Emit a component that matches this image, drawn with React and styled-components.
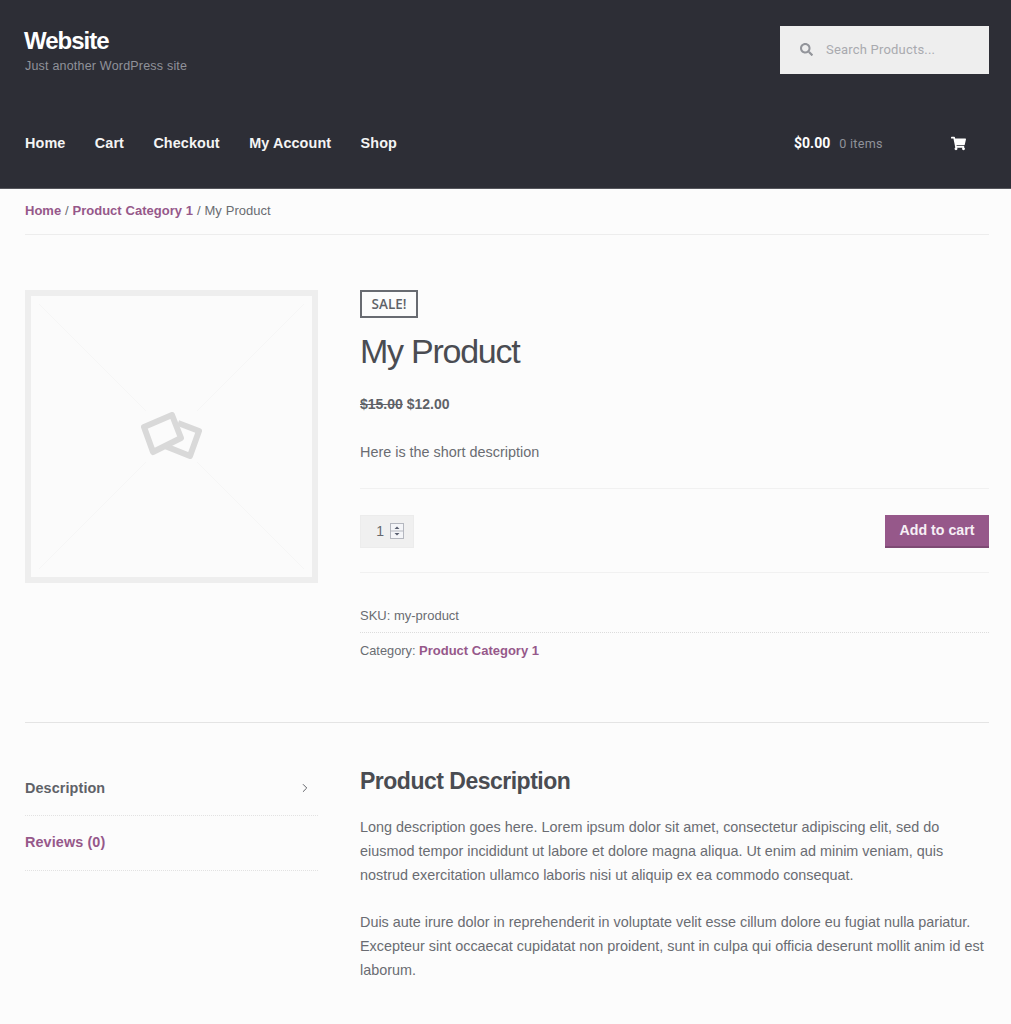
import React from "react"
import styled, { createGlobalStyle } from "styled-components"
import { FaSearch, FaShoppingCart } from "react-icons/fa"
import { ChevronRight } from "lucide-react"

const purple = "#96588a"
const text = "#6a6c72"
const dark = "#4a4c52"

const GlobalStyle = createGlobalStyle`
    html, body {
        margin: 0;
        padding: 0;
        background: #fcfcfc;
        color: ${text};
        font-family: "Liberation Sans", Arial, sans-serif;
    }
    * { box-sizing: border-box; }
    a { color: ${purple}; text-decoration: none; font-weight: 700; }
`

const Header = styled.header`
    height: 189px;
    padding: 26px 22px 0 25px;
    background: #2d2e36;
    border-bottom: 1px solid #55565c;
`

const HeaderTop = styled.div`
    display: flex;
    justify-content: space-between;
    align-items: flex-start;
    height: 48px;
`

const Brand = styled.div`
    display: flex;
    flex-direction: column;
    padding-top: 1px;
`

const SiteTitle = styled.span`
    margin-left: -1px;
    color: #fff;
    font-size: 24px;
    line-height: 28px;
    font-weight: 700;
    letter-spacing: -1px;
`

const Tagline = styled.span`
    margin-top: 4px;
    color: #90929a;
    font-size: 12.5px;
    line-height: 15px;
    letter-spacing: 0.2px;
`

const SearchBox = styled.div`
    display: flex;
    align-items: center;
    gap: 13px;
    width: 209px;
    height: 48px;
    padding: 0 0 2px 20px;
    background: #eeeeee;
    color: #a9aaaf;
    font-family: Roboto, sans-serif;
    font-size: 13px;
    letter-spacing: 0.2px;

    svg {
        color: #92949a;
        font-size: 13px;
    }
`

const HeaderBottom = styled.div`
    display: flex;
    justify-content: space-between;
    align-items: center;
    height: 26px;
    margin-top: 56px;
`

const Nav = styled.nav`
    display: flex;
    gap: 29.4px;
    color: #f4f4f4;
    font-size: 14.4px;
    font-weight: 700;
    letter-spacing: 0.1px;
`

const MiniCart = styled.div`
    display: flex;
    align-items: center;
    width: 195px;
    padding-right: 23px;
    font-family: Roboto, sans-serif;
    color: #fff;

    svg {
        margin-left: auto;
        font-size: 15px;
    }
`

const CartTotal = styled.strong`
    font-size: 14px;
    font-weight: 700;
`

const CartCount = styled.span`
    margin-left: 9px;
    color: #90929a;
    font-size: 12.6px;
    letter-spacing: 0.3px;
`

const Main = styled.main`
    padding: 0 22px 0 25px;
`

const Breadcrumb = styled.div`
    height: 46px;
    padding-top: 14px;
    border-bottom: 1px solid #ededed;
    font-size: 13px;
    line-height: 16px;
    word-spacing: 0.3px;
`

const Product = styled.section`
    display: grid;
    grid-template-columns: 293px 1fr;
    column-gap: 42px;
    padding-top: 55px;
    height: 488px;
    border-bottom: 1px solid #e4e4e4;
`

const ImageFrame = styled.div`
    width: 293px;
    height: 293px;
    border: 6px solid #eeeeee;
    background: #fbfbfb;

    svg {
        display: block;
    }
`

const Summary = styled.div`
    display: flex;
    flex-direction: column;
    align-items: stretch;
`

const SaleBadge = styled.span`
    align-self: flex-start;
    width: 58px;
    height: 28px;
    border: 2px solid #686b71;
    color: #5f6268;
    font-family: "Open Sans", sans-serif;
    font-size: 13.5px;
    line-height: 24px;
    font-weight: 600;
    text-align: center;
`

const Title = styled.h1`
    margin: 13px 0 0;
    color: ${dark};
    font-size: 34px;
    line-height: 40px;
    font-weight: 400;
    letter-spacing: -1.25px;
`

const Price = styled.div`
    margin-top: 24px;
    color: #5f6268;
    font-size: 14px;
    line-height: 18px;
    font-weight: 700;
`

const ShortDescription = styled.p`
    margin: 30px 0 0;
    font-size: 14.4px;
    line-height: 18px;
`

const CartRow = styled.div`
    display: flex;
    justify-content: space-between;
    align-items: center;
    margin-top: 27px;
    height: 85px;
    padding-top: 1px;
    border-top: 1px solid #f1f1f1;
    border-bottom: 1px solid #f1f1f1;
`

const Quantity = styled.div`
    display: flex;
    align-items: center;
    justify-content: flex-end;
    gap: 6px;
    width: 54px;
    height: 33px;
    padding-right: 10px;
    background: #f0f0f0;
    box-shadow: inset 0 0 0 1px #ececec;
    color: #66686e;
    font-size: 14px;
`

const Spinner = styled.svg`
    display: block;
`

const AddToCart = styled.button`
    width: 104px;
    height: 33px;
    padding: 0;
    border: 0;
    border-bottom: 2px solid #7e4a74;
    background: ${purple};
    color: #f6eff5;
    font-family: inherit;
    font-size: 14.2px;
    font-weight: 700;
`

const Sku = styled.div`
    height: 60px;
    padding-top: 34px;
    border-bottom: 1px dotted #dcdcdc;
    font-size: 13px;
    line-height: 18px;
`

const Category = styled.div`
    padding-top: 9px;
    font-size: 12.8px;
    line-height: 18px;

    a {
        font-size: 13px;
    }
`

const Details = styled.section`
    display: grid;
    grid-template-columns: 293px 1fr;
    column-gap: 42px;
    padding-top: 38px;
`

const Tabs = styled.ul`
    margin: 0;
    padding: 0;
    list-style: none;
`

const Tab = styled.li`
    display: flex;
    justify-content: space-between;
    align-items: center;
    height: 55px;
    padding: 0 6px ${({ $active }) => ($active ? "1px" : "3px")} 0;
    border-bottom: 1px dotted #e2e2e2;
    color: ${({ $active }) => ($active ? "#5f6268" : purple)};
    font-size: 14.4px;
    font-weight: 700;
    letter-spacing: 0.1px;

    svg {
        color: #55575d;
    }
`

const Content = styled.article`
    padding-top: 5px;
    font-size: 14.4px;
    line-height: 24px;
`

const ContentTitle = styled.h2`
    margin: 0 0 19px;
    color: ${dark};
    font-size: 23px;
    line-height: 30px;
    font-weight: 700;
    letter-spacing: -0.5px;
`

const Paragraph = styled.p`
    margin: 0 0 23px;
`

const PlaceholderMark = styled.g`
    filter: blur(0.7px);
`

const Placeholder = () => (
    <svg width="281" height="281" viewBox="0 0 281 281">
        <g stroke="#f6f6f6" strokeWidth="1">
            <path d="M8 8 L115 115 M273 8 L166 115 M8 273 L115 166 M273 273 L166 166" />
        </g>
        <PlaceholderMark fill="none" stroke="#d9d9d9" strokeWidth="6" strokeLinejoin="round">
            <path d="M147 127 L168 135 L159 160 L134 150" />
            <path d="M113 131 L141 119 L150 142 L122 156 Z" />
        </PlaceholderMark>
    </svg>
)

const Qty = () => (
    <Quantity>
        1
        <Spinner width="14" height="16" viewBox="0 0 14 16">
            <rect x="0.5" y="0.5" width="13" height="15" fill="#f4f5f8" stroke="#b4b7bf" />
            <path d="M0.5 8 H13.5" stroke="#b4b7bf" />
            <path d="M7 3.5 L9.5 6 H4.5 Z M7 12.5 L4.5 10 H9.5 Z" fill="#5a6070" />
        </Spinner>
    </Quantity>
)

const App = () => {
    return (
        <>
            <GlobalStyle />
            <Header>
                <HeaderTop>
                    <Brand>
                        <SiteTitle>Website</SiteTitle>
                        <Tagline>Just another WordPress site</Tagline>
                    </Brand>
                    <SearchBox>
                        <FaSearch />
                        Search Products...
                    </SearchBox>
                </HeaderTop>
                <HeaderBottom>
                    <Nav>
                        <span>Home</span>
                        <span>Cart</span>
                        <span>Checkout</span>
                        <span>My Account</span>
                        <span>Shop</span>
                    </Nav>
                    <MiniCart>
                        <CartTotal>$0.00</CartTotal>
                        <CartCount>0 items</CartCount>
                        <FaShoppingCart />
                    </MiniCart>
                </HeaderBottom>
            </Header>
            <Main>
                <Breadcrumb>
                    <a href="#home">Home</a> / <a href="#cat">Product Category 1</a> / My Product
                </Breadcrumb>
                <Product>
                    <ImageFrame>
                        <Placeholder />
                    </ImageFrame>
                    <Summary>
                        <SaleBadge>SALE!</SaleBadge>
                        <Title>My Product</Title>
                        <Price>
                            <del>$15.00</del> $12.00
                        </Price>
                        <ShortDescription>Here is the short description</ShortDescription>
                        <CartRow>
                            <Qty />
                            <AddToCart>Add to cart</AddToCart>
                        </CartRow>
                        <Sku>SKU: my-product</Sku>
                        <Category>
                            Category: <a href="#cat">Product Category 1</a>
                        </Category>
                    </Summary>
                </Product>
                <Details>
                    <Tabs>
                        <Tab $active>
                            Description
                            <ChevronRight size={14} strokeWidth={1.6} />
                        </Tab>
                        <Tab>Reviews (0)</Tab>
                    </Tabs>
                    <Content>
                        <ContentTitle>Product Description</ContentTitle>
                        <Paragraph>
                            Long description goes here. Lorem ipsum dolor sit amet, consectetur adipiscing elit, sed do eiusmod tempor incididunt ut labore et dolore magna aliqua. Ut enim ad minim veniam, quis nostrud exercitation ullamco laboris nisi ut aliquip ex ea commodo consequat.
                        </Paragraph>
                        <Paragraph>
                            Duis aute irure dolor in reprehenderit in voluptate velit esse cillum dolore eu fugiat nulla pariatur. Excepteur sint occaecat cupidatat non proident, sunt in culpa qui officia deserunt mollit anim id est laborum.
                        </Paragraph>
                    </Content>
                </Details>
            </Main>
        </>
    )
}

export default App
